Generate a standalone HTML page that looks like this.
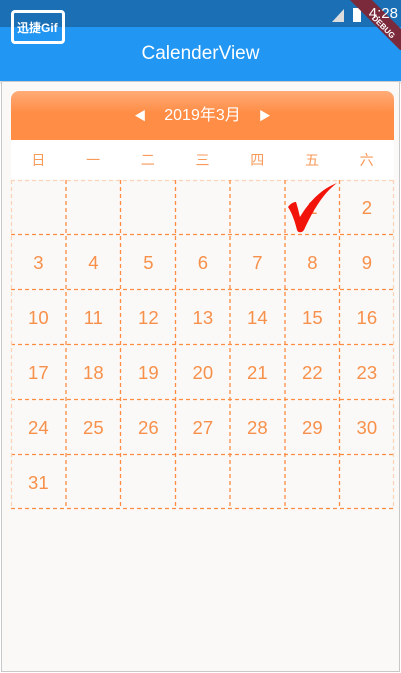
<!DOCTYPE html>
<html><head><meta charset="utf-8"><style>
*{margin:0;padding:0;box-sizing:border-box}
body{width:401px;height:673px;background:#fff;position:relative;overflow:hidden;font-family:"Liberation Sans","Noto Sans CJK SC",sans-serif}
.status{position:absolute;left:0;top:0;width:401px;height:27px;background:#1b6fb5}
.app{position:absolute;left:0;top:27px;width:401px;height:54px;background:#2196f3;color:#fff;font-size:19px;text-align:center;line-height:54px;box-shadow:0 2px 3px rgba(0,0,0,.25)}
.page{position:absolute;left:1px;top:82px;width:399px;height:590px;background:#faf9f7;border:1px solid #c8c8c8;border-top:none}
.head{position:absolute;left:11px;top:91px;width:383px;height:49px;border-radius:8px 8px 0 0;background:linear-gradient(#ffab78,#ff8d45 45%,#ff8d45);color:#fff;font-size:16px;text-align:center;line-height:50px}
.wk{position:absolute;left:11px;top:140px;width:383px;height:40px;background:#fff;display:flex}
.wk div{flex:1;text-align:center;line-height:40px;color:#f79a5a;font-size:14px}
.n{position:absolute;width:54.7px;text-align:center;color:#f7904a;font-size:18.5px;line-height:20px}
</style></head><body>
<div class="status"></div>
<div style="position:absolute;left:11px;top:10px;width:54px;height:34px;border:3px solid #fff;border-radius:4px;color:#fff;font-size:12px;font-weight:bold;padding:6px 0 0 3px;z-index:3">迅捷Gif</div>
<svg style="position:absolute;left:330px;top:0;z-index:3" width="71" height="50"><polygon points="2,22 14,22 14,9" fill="#ddd"/><rect x="23" y="8" width="8" height="14" fill="#fff"/><polygon points="20,0 42,0 71,29 71,51" fill="#7a2a3b"/><text x="42" y="27" fill="#fff" font-size="8" font-weight="bold" transform="rotate(45 52 22)" font-family="Liberation Sans">DEBUG</text></svg>
<div style="position:absolute;right:3px;top:5px;color:#fff;font-size:15px;z-index:4">4:28</div>
<div class="app">CalenderView</div>
<div class="page"></div>
<div class="head"><span style="font-size:12px;margin-right:18px">◀</span>2019年3月<span style="font-size:12px;margin-left:18px">▶</span></div>
<div class="wk"><div>日</div><div>一</div><div>二</div><div>三</div><div>四</div><div>五</div><div>六</div></div>
<svg style="position:absolute;left:0;top:0" width="401" height="673">
<g stroke="#ff8c42" stroke-width="1.3" stroke-dasharray="4 3" fill="none">
<line x1="11" y1="180.5" x2="394" y2="180.5" stroke="#fcd3b8"/>
<line x1="11" y1="234.5" x2="394" y2="234.5"/>
<line x1="11" y1="289.5" x2="394" y2="289.5"/>
<line x1="11" y1="344.5" x2="394" y2="344.5"/>
<line x1="11" y1="399.5" x2="394" y2="399.5"/>
<line x1="11" y1="454.5" x2="394" y2="454.5"/>
<line x1="11" y1="508.5" x2="394" y2="508.5"/>
<line x1="11.5" y1="180" x2="11.5" y2="508" stroke="#fcd3b8"/>
<line x1="66" y1="180" x2="66" y2="508"/>
<line x1="120.5" y1="180" x2="120.5" y2="508"/>
<line x1="175.5" y1="180" x2="175.5" y2="508"/>
<line x1="230" y1="180" x2="230" y2="508"/>
<line x1="285" y1="180" x2="285" y2="508"/>
<line x1="339.5" y1="180" x2="339.5" y2="508"/>
<line x1="393.5" y1="180" x2="393.5" y2="508" stroke="#fcd3b8"/>
</g></svg>
<div class="n" style="left:285px;top:198px">1</div>
<div class="n" style="left:339.5px;top:198px">2</div>
<div class="n" style="left:11px;top:253px">3</div><div class="n" style="left:66px;top:253px">4</div><div class="n" style="left:121px;top:253px">5</div><div class="n" style="left:175.5px;top:253px">6</div><div class="n" style="left:230px;top:253px">7</div><div class="n" style="left:285px;top:253px">8</div><div class="n" style="left:339.5px;top:253px">9</div>
<div class="n" style="left:11px;top:308px">10</div><div class="n" style="left:66px;top:308px">11</div><div class="n" style="left:121px;top:308px">12</div><div class="n" style="left:175.5px;top:308px">13</div><div class="n" style="left:230px;top:308px">14</div><div class="n" style="left:285px;top:308px">15</div><div class="n" style="left:339.5px;top:308px">16</div>
<div class="n" style="left:11px;top:363px">17</div><div class="n" style="left:66px;top:363px">18</div><div class="n" style="left:121px;top:363px">19</div><div class="n" style="left:175.5px;top:363px">20</div><div class="n" style="left:230px;top:363px">21</div><div class="n" style="left:285px;top:363px">22</div><div class="n" style="left:339.5px;top:363px">23</div>
<div class="n" style="left:11px;top:418px">24</div><div class="n" style="left:66px;top:418px">25</div><div class="n" style="left:121px;top:418px">26</div><div class="n" style="left:175.5px;top:418px">27</div><div class="n" style="left:230px;top:418px">28</div><div class="n" style="left:285px;top:418px">29</div><div class="n" style="left:339.5px;top:418px">30</div>
<div class="n" style="left:11px;top:473px">31</div>
<svg style="position:absolute;left:285px;top:180px" width="60" height="60"><path d="M3,27 C6,23 9,22 11,22 C13,28 14,33 15,37 C24,22 36,9 52,3 C40,12 30,26 19,50 C17,53 13,53 12,50 C10,42 7,33 3,27 Z" fill="#f2140a"/></svg>
</body></html>
